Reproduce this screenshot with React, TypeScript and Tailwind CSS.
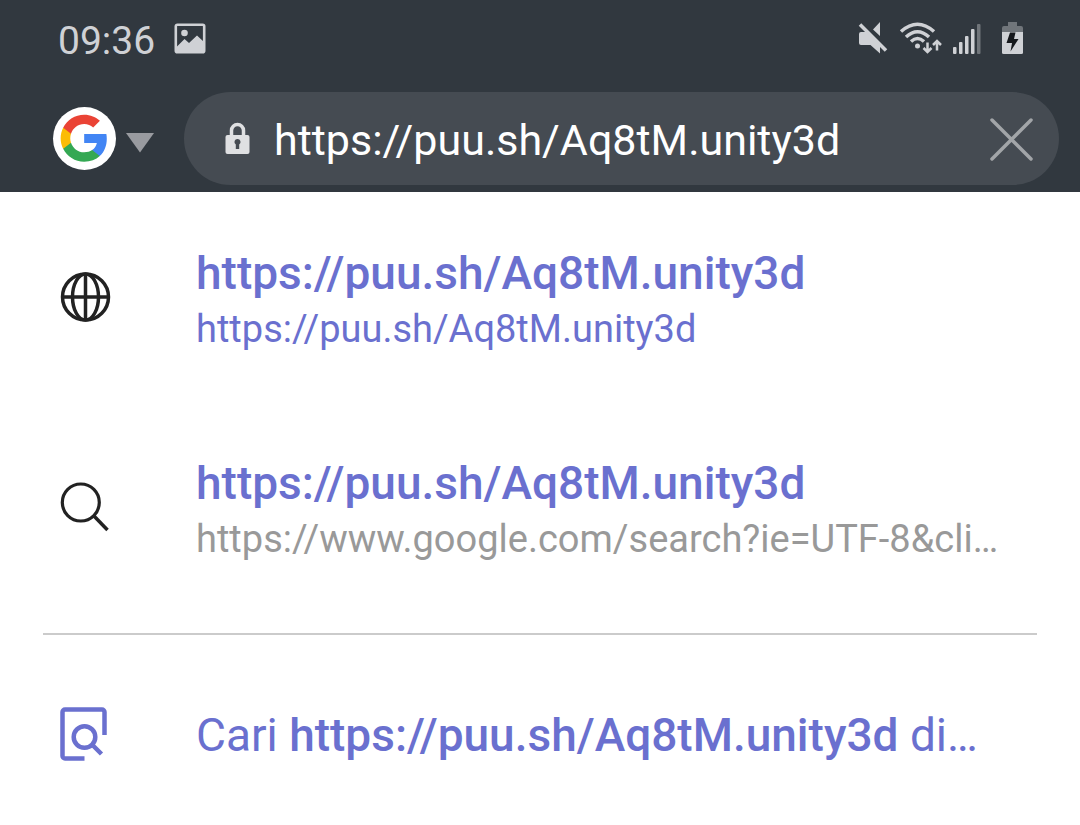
import { useState } from 'react';

const URL_TEXT = 'https://puu.sh/Aq8tM.unity3d';

function StatusBar() {
    return (
        <div className="flex h-20 items-center pl-[58px] pr-14 text-[#cfd1d5]">
            <span className="pt-0.5 text-[39px] leading-10">09:36</span>
            <svg className="ml-[19px] mb-1" width="32" height="32" viewBox="0 0 32 32" fill="none">
                <rect x="1.8" y="2.8" width="28.4" height="27.4" rx="1.5" stroke="currentColor" strokeWidth="2.600" />
                <circle cx="10.500" cy="11" r="3.300" fill="currentColor" />
                <path d="M3 24.500l7.500-7.500 4.500 4 8-7.500 7 6.500v9.500H3z" fill="currentColor" />
            </svg>

            <div className="ml-auto mb-1 flex items-center">
                {/* Muted */}
                <svg className="mr-[10px]" width="32" height="36" viewBox="0 0 32 36" fill="currentColor">
                    <path d="M24 2v14l-7-6.500zM5 12h6l13 14v7.500L14.500 25H5a2 2 0 0 1-2-2v-9a2 2 0 0 1 2-2z" />
                    <path d="M4 4.500L30 30.500" stroke="currentColor" strokeWidth="3.500" />
                </svg>
                {/* Wifi */}
                <svg className="mr-[10px]" width="44" height="36" viewBox="0 0 44 36" fill="none" stroke="currentColor" strokeWidth="3.500">
                    <path d="M3 11.500Q19.500-3 36 11.500M8 17Q19.500 6.500 31 17M13 21.500Q19.500 15.500 26 21.500" />
                    <circle cx="19.500" cy="26" r="2.500" fill="currentColor" stroke="none" />
                    <path d="M29.500 22.500v9M25.500 28l4 4 4-4M39 30.500v-9M35 25l4-4 4 4" strokeWidth="2.500" />
                </svg>
                {/* Signal */}
                <svg className="mr-[18px]" width="30" height="36" viewBox="0 0 30 36" fill="currentColor">
                    <rect x="1" y="27" width="3.500" height="7" rx="1" />
                    <rect x="7" y="22" width="3.500" height="12" rx="1" />
                    <rect x="13" y="16" width="3.500" height="18" rx="1" />
                    <rect x="19" y="9" width="3.500" height="25" rx="1" />
                    <rect x="25" y="4" width="3.500" height="30" rx="1" opacity="0.4" />
                </svg>
                {/* Battery */}
                <svg width="24" height="36" viewBox="0 0 24 36" fill="currentColor">
                    <path d="M8 2h9v4h4a2 2 0 0 1 2 2v4H2V8a2 2 0 0 1 2-2h4z" opacity="0.4" />
                    <path d="M2 12h21v20.500a1.500 1.500 0 0 1-1.500 1.500h-18a1.500 1.500 0 0 1-1.500-1.500z" />
                    <path d="M10 12.500h5.500L14 19h4.500l-8 12.500 1.500-8.500H6.500z" fill="#15181c" />
                </svg>
            </div>
        </div>
    );
}

function GoogleLogo() {
    return (
        <svg width="64" height="64" viewBox="0 0 64 64">
            <circle cx="32.500" cy="31.500" r="31.500" fill="#fff" />
            <g transform="translate(6.500 5.500) scale(2.140)">
                <path fill="#4285f4" d="M22.56 12.25c0-.78-.07-1.53-.2-2.250H12v4.260h5.920c-.26 1.370-1.040 2.530-2.210 3.310v2.770h3.570c2.080-1.920 3.280-4.740 3.280-8.090z" />
                <path fill="#34a853" d="M12 23c2.970 0 5.460-.98 7.280-2.660l-3.570-2.770c-.98.66-2.230 1.060-3.710 1.060-2.860 0-5.290-1.930-6.160-4.530H2.180v2.840C3.990 20.530 7.700 23 12 23z" />
                <path fill="#fbbc05" d="M5.840 14.090c-.22-.66-.35-1.360-.35-2.090s.13-1.430.35-2.090V7.070H2.180C1.430 8.550 1 10.220 1 12s.43 3.450 1.180 4.930l3.660-2.840z" />
                <path fill="#ea4335" d="M12 5.380c1.620 0 3.060.56 4.210 1.640l3.150-3.150C17.450 2.090 14.970 1 12 1 7.700 1 3.990 3.470 2.180 7.070l3.660 2.840c.87-2.600 3.300-4.530 6.160-4.530z" />
            </g>
        </svg>
    );
}

function AddressBar() {
    const [value, setValue] = useState(URL_TEXT);

    return (
        <div className="flex items-center pl-[52px] pr-[21px] pt-3 pb-[7px]">
            <button aria-label="Search engine" className="mr-[30px] flex shrink-0 items-center gap-[10px]">
                <GoogleLogo />
                <svg className="mt-2" width="28" height="20" viewBox="0 0 28 20">
                    <path d="M0 0h28L14 19.500z" fill="#999ba0" />
                </svg>
            </button>
            <form
                className="flex h-[93px] min-w-0 flex-1 items-center rounded-full bg-[#454b52] pl-10 pr-6"
                onSubmit={(e) => e.preventDefault()}
            >
                <svg className="mr-6 shrink-0" width="26" height="34" viewBox="0 0 26 34">
                    <path d="M7.500 16V8.500a6 6 0 0 1 12 0V16" fill="none" stroke="#dfe0e2" strokeWidth="3.500" />
                    <rect x="1.500" y="13" width="24" height="19" rx="2" fill="#dfe0e2" />
                    <path d="M13.500 17a3 3 0 0 1 1.700 5.500V27h-3.400v-4.500A3 3 0 0 1 13.500 17z" fill="#454b52" />
                </svg>
                <input
                    type="text"
                    aria-label="Address"
                    className="min-w-0 flex-1 bg-transparent pt-1 text-[43px] text-white outline-none"
                    value={value}
                    onChange={(e) => setValue(e.target.value)}
                />
                <button type="button" aria-label="Clear" className="shrink-0" onClick={() => setValue('')}>
                    <svg width="48" height="48" viewBox="0 0 48 48">
                        <path d="M5 5l39 39M44 5L5 44" stroke="#a2a5a8" strokeWidth="3.500" strokeLinecap="round" />
                    </svg>
                </button>
            </form>
        </div>
    );
}

function GlobeIcon() {
    return (
        <svg width="52" height="52" viewBox="0 0 52 52" fill="none" stroke="#222" strokeWidth="3.500">
            <circle cx="26.500" cy="26" r="23" />
            <ellipse cx="26.500" cy="26" rx="13" ry="23" />
            <path d="M26.500 3v46M3 26h46" />
        </svg>
    );
}

function SearchIcon() {
    return (
        <svg width="52" height="52" viewBox="0 0 52 52" fill="none" stroke="#222" strokeWidth="3.200">
            <circle cx="21.800" cy="21.500" r="18.500" />
            <path d="M35 35l13.500 14" strokeWidth="3.500" />
        </svg>
    );
}

function PageSearchIcon() {
    return (
        <svg width="52" height="56" viewBox="0 0 52 56" fill="none" stroke="#6a70cf" strokeWidth="4.500">
            <path d="M25.500 51.500H6a2.500 2.500 0 0 1-2.500-2.500V5A2.500 2.500 0 0 1 6 2.500h37A2.500 2.500 0 0 1 45.500 5v23" />
            <circle cx="25.500" cy="30" r="10.800" />
            <path d="M33 37.500l9.500 9.500" />
        </svg>
    );
}

const suggestions = [
    { icon: <GlobeIcon />, title: URL_TEXT, subtitle: URL_TEXT, subtitleClass: 'text-[#6a70cf]' },
    {
        icon: <SearchIcon />,
        title: URL_TEXT,
        subtitle: 'https://www.google.com/search?ie=UTF-8&cli…',
        subtitleClass: 'text-[#999999]',
    },
];

export default function App() {
    return (
        <div className="min-h-screen bg-white font-[Roboto,sans-serif]">
            <header className="bg-[#31383f]">
                <StatusBar />
                <AddressBar />
            </header>

            <main>
                <ul>
                    {suggestions.map((item, i) => (
                        <li key={i}>
                            <a href="#" className="flex h-[210px] items-center gap-[85px] pl-[59px] pr-6">
                                <span className="shrink-0">{item.icon}</span>
                                <span className="min-w-0 flex-1 whitespace-nowrap pt-1">
                                    <span className="block text-[46px] font-medium leading-[60px] text-[#6a70cf]">{item.title}</span>
                                    <span className={`block text-[38px] leading-[52px] ${item.subtitleClass}`}>{item.subtitle}</span>
                                </span>
                            </a>
                        </li>
                    ))}
                </ul>
                <hr className="mx-[43px] mt-[21px] border-t-2 border-[#cbcbcb]" />
                <a href="#" className="flex h-[200px] items-center gap-[85px] pl-[59px] pr-6 text-[#6a70cf]">
                    <span className="shrink-0"><PageSearchIcon /></span>
                    <span className="min-w-0 flex-1 whitespace-nowrap text-[46px] leading-[60px]">
                        Cari <b className="font-medium">{URL_TEXT}</b> di…
                    </span>
                </a>
            </main>
        </div>
    );
}
